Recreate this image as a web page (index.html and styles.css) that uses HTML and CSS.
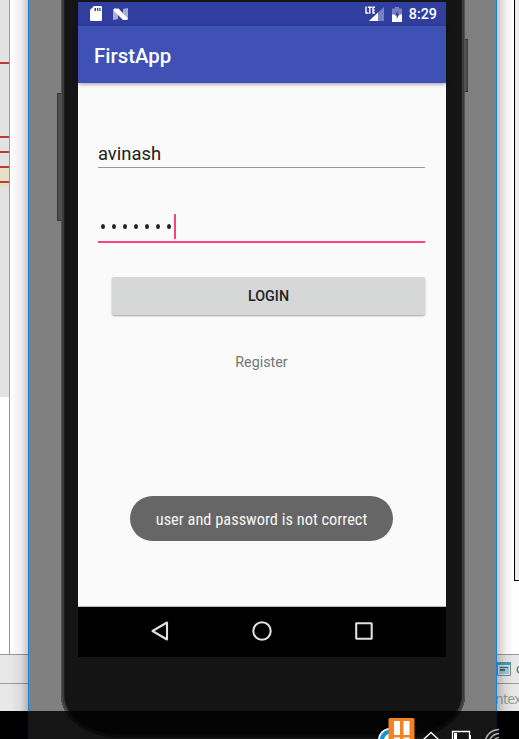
FILE: index.html
```
<!DOCTYPE html>
<html lang="en">
<head>
<meta charset="utf-8">
<title>FirstApp</title>
<link rel="stylesheet" href="styles.css">
</head>
<body>
<div class="desktop">
  <aside class="ide ide-left">
    <div class="gutter">
      <div class="stripe">
        <i class="mark m1"></i><i class="mark m2"></i><i class="mark m3"></i>
        <div class="warn"><i class="mark"></i><i class="mark"></i></div>
      </div>
    </div>
    <div class="row row-a"></div>
    <div class="row row-b"></div>
    <div class="shade shade-left"></div>
  </aside>

  <main class="emulator">
    <i class="key key-left"></i>
    <i class="key key-right"></i>
    <div class="phone">
      <div class="screen">
        <header class="status">
          <svg class="sd" width="12" height="15" viewBox="0 0 12 15"><path fill="#fff" fill-rule="evenodd" d="M4 0H11Q12 0 12 1V14Q12 15 11 15H1Q0 15 0 14V4ZM4.5 2V5H6V2ZM7 2V5H8.3V2ZM9.3 2V5H10.6V2Z"/></svg>
          <svg class="nn" width="15" height="13" viewBox="0 0 15 13"><path fill="#a9afd8" d="M0 1L5 1V11L0 12ZM10 1L15 0V11H10Z"/><path fill="#fff" d="M1 .5H5.500L14.500 10V12H10L1 3Z"/></svg>
          <span class="spacer"></span>
          <svg class="lte" width="19" height="16" viewBox="0 0 19 16"><path fill="#7780c3" d="M19 1V15H4Z"/><path fill="#fff" d="M13 6.600V15H4Z"/><path fill="#303f9f" d="M0 0H10.500V8.500H0Z"/><path fill="none" stroke="#fff" stroke-width="1.400" d="M1 .5V7H3.600M2.800 1.200H6.800M4.800 1V7.700M10 1.200H8V7H10M8 4.200H9.700"/></svg>
          <svg class="bat" width="10" height="15" viewBox="0 0 10 15"><path fill="#7780c3" d="M3 0H7V1.500H10V8H0V1.500H3Z"/><path fill="#fff" d="M0 7.500H10V15H0Z"/><path fill="#303f9f" d="M5.700 3.500V7H7.500L4.700 12V8.500H2.800Z"/></svg>
          <span class="clock">8:29</span>
        </header>
        <div class="appbar">FirstApp</div>
        <section class="content">
          <div class="field user">avinash</div>
          <div class="field pass"><span class="dots"><i></i><i></i><i></i><i></i><i></i><i></i><i></i></span><i class="caret"></i></div>
          <button class="login">LOGIN</button>
          <div class="register">Register</div>
          <div class="toast">user and password is not correct</div>
        </section>
        <nav class="nav">
          <svg width="20" height="20" viewBox="0 0 20 20"><path d="M17 1.500V18.500L2.500 10Z"/></svg>
          <svg width="20" height="20" viewBox="0 0 20 20"><circle cx="10" cy="10" r="8.700"/></svg>
          <svg width="20" height="20" viewBox="0 0 20 20"><rect x="2.200" y="2.200" width="15.500" height="15.500" rx=".5"/></svg>
        </nav>
      </div>
    </div>
  </main>

  <aside class="ide ide-right">
    <div class="pane"></div>
    <div class="below"></div>
    <div class="row row-a"><svg width="15" height="14" viewBox="0 0 15 14"><path fill="#e0e5e8" stroke="#7c8b93" d="M.5 .5H13.500V13.500H.5Z"/><path fill="#479bbd" d="M0 0H14V3H0Z"/><path fill="#9acae0" d="M2 4H12V12H2Z"/><path stroke="#4e6872" d="M3 5.500H11M3 7.500H8M3 8.500H8"/></svg><span class="tab">c</span></div>
    <div class="row row-b"><span class="ctx">ntex</span></div>
    <div class="shade shade-right"></div>
  </aside>

  <footer class="taskbar">
    <svg width="141" height="23" viewBox="0 0 141 23">
      <circle cx="12" cy="22" r="12" fill="#fff"/><path fill="none" stroke="#1593d2" stroke-width="4" d="M3 25Q4 13 15 13"/>
      <rect x="10.500" y="0" width="26" height="26" rx="1.500" fill="#f58220"/>
      <path fill="#fff" d="M16 3H22V17H16ZM25.500 3H31.500V17H25.500ZM16 19.500H22V23H16ZM25.500 19.500H31.500V23H25.500Z"/>
      <path fill="none" stroke="#fff" stroke-width="1.300" d="M45 22L53 14.500L61 22M74.500 24V13.500H91.500V24"/>
      <path fill="#fff" d="M76 15H79V23H76ZM92 17H93V23H92Z"/>
      <path fill="none" stroke="#b5b5b5" stroke-width="1.300" d="M107 23Q110 12 121 11.500M111 23Q114 16 121 15.500M115 23Q117 20 121 19.500"/>
    </svg>
  </footer>
</div>
</body>
</html>
```
FILE: styles.css
```
* { box-sizing: border-box; }
body { margin: 0; font-family: Roboto, sans-serif; }
svg { display: block; flex: none; }
.desktop { position: relative; width: 519px; height: 739px; overflow: hidden; display: grid; grid-template-columns: 28px 469px 22px; background: #fff; }

.ide { position: relative; display: flex; flex-direction: column; overflow: hidden; }
.row { background: #e8e8e8; border-top: 1px solid #999; flex: none; }
.row-a { height: 29px; }
.row-b { height: 56px; }
.gutter { width: 10px; height: 654px; border-right: 1px solid #999; }
.stripe { height: 397px; background: #e2e2e2; padding-top: 62px; }
.mark { display: block; height: 2px; background: #b73b36; }
.m2 { margin-top: 72px; }
.m3 { margin-top: 13px; }
.warn { margin-top: 13px; height: 21px; background: #e5dfc6; }
.warn .mark + .mark { margin-top: 13px; }
.shade { position: absolute; top: 0; bottom: 0; }
.shade-left { left: 10px; right: 0; background: linear-gradient(to right, rgba(0,0,0,0), rgba(0,0,0,.06) 60%, rgba(0,0,0,.22)); }
.shade-right { left: 0; width: 17px; background: linear-gradient(to left, rgba(0,0,0,0), rgba(0,0,0,.06) 50%, rgba(0,0,0,.22)); }

.pane { margin-left: 17px; height: 581px; background: #eee; border-left: 1px solid #000; border-bottom: 1px solid #000; }
.below { height: 73px; }
.ide-right .row { overflow: hidden; white-space: nowrap; display: flex; }
.ide-right .row-a { padding: 7px 0 0; }
.tab { font: 12px/14px "Open Sans", sans-serif; color: #124c90; margin-left: 4px; }
.ctx { font: 14px/20px "Noto Sans", sans-serif; letter-spacing: -.7px; color: #999; margin: 5px 0 0 -2px; }

.emulator { position: relative; background: #808080; border: 1px solid #1683d8; border-width: 0 1px; padding-left: 32px; overflow: hidden; height: 739px; }
.key { position: absolute; width: 5px; background: linear-gradient(to right, #333, #555 50%, #3a3a3a); border: solid #333; border-width: 1px 0; }
.key-left { left: 28px; top: 93px; height: 128px; }
.key-right { right: 28px; top: 39px; height: 53px; }
.phone { position: relative; width: 404px; height: 758px; margin-top: -20px; padding: 22px 18px 0 17px; background: #141414; border-radius: 20px 20px 60px 60px / 20px 20px 43px 43px; box-shadow: inset 0 0 0 1px #505154, inset 0 0 0 3px #3a3b3d, inset 0 0 0 4px #1e1e1e; }
.screen { width: 368px; height: 655px; display: flex; flex-direction: column; background: #fafafa; }

.status { height: 24px; background: #303f9f; display: flex; align-items: flex-start; padding: 4px 9px 0 12px; }
.nn { margin: 2px 0 0 11px; }
.spacer { flex: 1; }
.lte { margin-right: 1px; }
.bat { margin: 1px 7px 0 7px; }
.clock { font-weight: 500; font-size: 14.300px; line-height: 17px; color: #fff; }
.appbar { height: 57px; background: #3f51b5; color: #fff; font-weight: 500; font-size: 20.400px; line-height: 60px; padding-left: 16px; box-shadow: 0 1px 4px rgba(0,0,0,.4); }
.content { height: 524px; border-bottom: 1px solid #b8bab9; padding: 56px 21px 0 20px; display: flex; flex-direction: column; }
.field { flex: none; color: #212121; }
.user { height: 29px; border-bottom: 1px solid #999; font-size: 18.400px; line-height: 29px; }
.pass { margin-top: 46px; height: 29px; border-bottom: 2px solid #ff4081; display: flex; }
.dots { display: flex; flex: none; gap: 7px; padding: 10px 0 0 3px; }
.dots i { width: 4px; height: 5px; border-radius: 50%; background: #212121; }
.caret { width: 2px; height: 25px; margin-left: 3px; background: #ff4081; }
.login { margin: 34px 0 0 14px; height: 38px; flex: none; border: 0; border-radius: 2px; background: #d6d7d7; color: #212121; font: 500 14.300px/38px Roboto, sans-serif; padding: 0; box-shadow: 0 1px 2px rgba(0,0,0,.35); }
.register { margin-top: 37px; font-size: 14.300px; line-height: 20px; color: #757575; text-align: center; }
.toast { align-self: center; margin-top: 124px; width: 263px; height: 45px; flex: none; border-radius: 23px; background: #666; color: #f5f5f5; font-family: "Roboto Condensed", Roboto, sans-serif; font-size: 16.400px; line-height: 47px; text-align: center; white-space: nowrap; }
.nav { height: 50px; background: #000; display: flex; justify-content: center; align-items: center; gap: 82px; padding: 0 1px 2px 0; }
.nav svg { fill: none; stroke: #e0e0e0; stroke-width: 2.100; stroke-linejoin: round; }

.taskbar { position: absolute; left: 0; right: 0; bottom: 0; height: 28px; background: linear-gradient(to right, #000 28px, rgba(0,0,0,.84) 28px, rgba(0,0,0,.84) 497px, #000 497px); padding: 7px 0 0 378px; overflow: hidden; }
```
